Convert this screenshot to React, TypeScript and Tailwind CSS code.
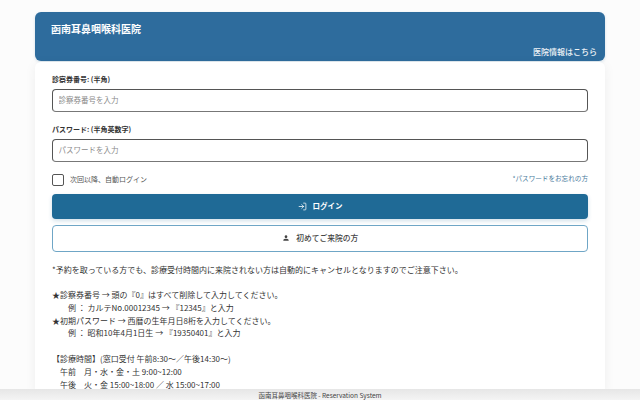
import { LogIn } from "lucide-react";
import { MdPerson } from "react-icons/md";

const font = "font-['Noto_Sans_CJK_JP','Noto_Sans',sans-serif]";

function Field({ label, placeholder }: { label: string; placeholder: string }) {
  return (
    <div>
      <label className="block h-[12px] text-[7px] leading-[12px] font-bold text-[#333333]">{label}</label>
      <input
        type="text"
        placeholder={placeholder}
        className="mt-[4px] block h-[22.5px] w-full rounded-[4px] border-[1.5px] border-[#555555] border-b-[#777777] bg-white px-[5.5px] pb-[1px] text-[7.5px] outline-none placeholder:text-[#8a8a8a]"
      />
    </div>
  );
}

export default function App() {
  return (
    <div className={`relative h-screen overflow-hidden bg-[#fcfcfc] ${font}`}>
      <div className="mx-auto w-[570px] pt-[12px]">
        <header className="flex h-[49px] flex-col justify-between rounded-[6px] bg-[#2e6c9d] px-[8px] pt-[9px] pb-[3px] shadow-[0_1px_3px_rgba(46,108,157,0.2)]">
          <h1 className="ml-[8px] text-[10px] leading-[16px] font-bold text-white">函南耳鼻咽喉科医院</h1>
          <a className="self-end text-[8px] leading-[12px] font-medium text-[#eef3f7]">医院情報はこちら</a>
        </header>

        <main className="mt-[1px] rounded-t-[6px] bg-white px-[17px] pt-[11px] shadow-[0_2px_12px_rgba(0,0,0,0.06)]">
          <div className="flex flex-col gap-[11.5px]">
            <Field label="診察券番号: (半角)" placeholder="診察券番号を入力" />
            <Field label="パスワード: (半角英数字)" placeholder="パスワードを入力" />
          </div>

          <div className="mt-[12px] flex h-[13px] items-center justify-between">
            <label className="flex items-center gap-[6px] text-[7px] text-[#555555]">
              <span className="h-[12px] w-[12px] rounded-[2px] border border-[#555555] bg-white" />
              <span className="pb-[2px]">次回以降、自動ログイン</span>
            </label>
            <a className="pb-[2px] text-[6.6px] text-[#4a7a9c]">*パスワードをお忘れの方</a>
          </div>

          <button className="mt-[7px] flex h-[25px] w-full items-center justify-center gap-[6px] rounded-[4px] bg-[#1f6a96] text-[7.5px] font-bold text-white shadow-[0_2px_4px_rgba(31,106,150,0.2)]">
            <LogIn className="h-[9px] w-[9px]" strokeWidth={2} />
            ログイン
          </button>
          <button className="mt-[6px] flex h-[27px] w-full items-center justify-center gap-[6.5px] rounded-[4px] border border-[#6fa6c6] bg-white text-[7.75px] font-medium text-[#444444]">
            <MdPerson className="h-[8px] w-[8px]" />
            初めてご来院の方
          </button>

          <div className="mt-[12px] text-[8px] leading-[12.8px] text-[#333333]">
            <p>*予約を取っている方でも、診療受付時間内に来院されない方は自動的にキャンセルとなりますのでご注意下さい。</p>
            <p className="mt-[12.8px]">★診察券番号 → 頭の『0』はすべて削除して入力してください。</p>
            <p className="pl-[16px]">例 ： カルテNo.00012345 → 『12345』と入力</p>
            <p>★初期パスワード → 西暦の生年月日8桁を入力してください。</p>
            <p className="pl-[16px]">例 ： 昭和10年4月1日生 → 『19350401』と入力</p>
            <p className="mt-[12.8px]">【診療時間】(窓口受付 午前8:30～／午後14:30～)</p>
            <p className="pl-[8px]">午前　月・水・金・土 9:00~12:00</p>
            <p className="pl-[8px]">午後　火・金 15:00~18:00 ／ 水 15:00~17:00</p>
          </div>
        </main>
      </div>

      <footer className="fixed inset-x-0 bottom-0 h-[11px] bg-gradient-to-b from-[#e6e6e6] to-[#f4f4f4] pt-[1px] text-center text-[6.5px] leading-[10px] text-[#444444]">
        函南耳鼻咽喉科医院 - Reservation System
      </footer>
    </div>
  );
}
